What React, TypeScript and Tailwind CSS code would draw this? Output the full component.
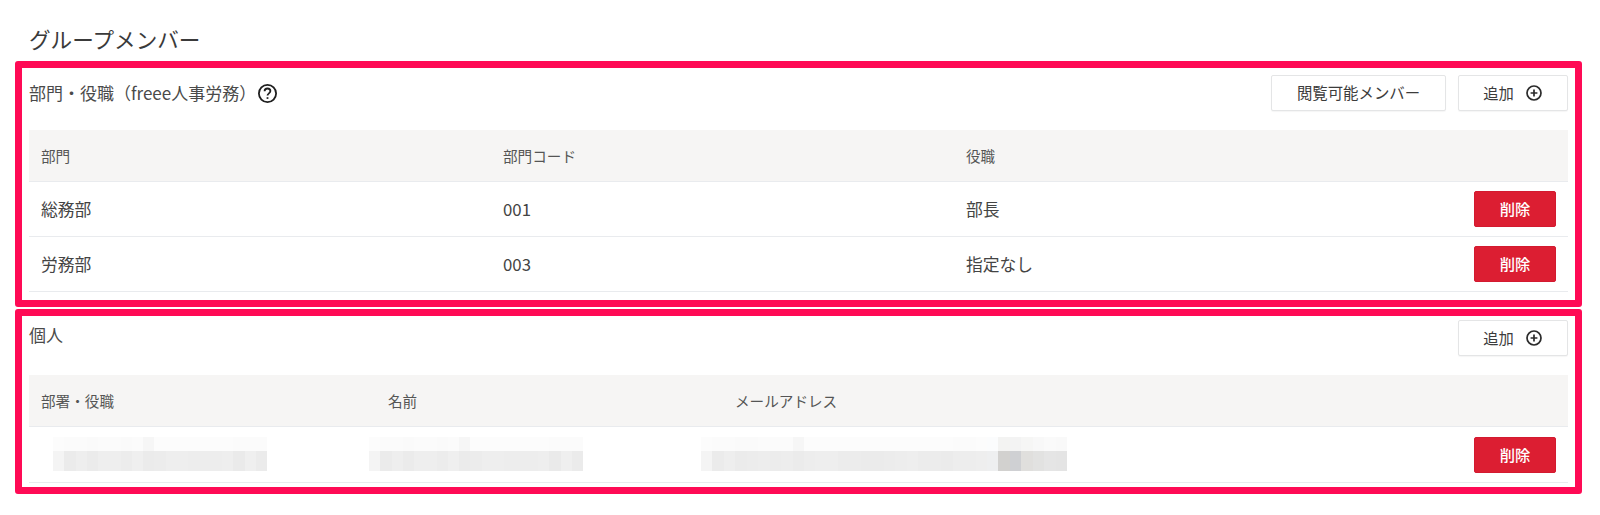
const jp = "font-['Noto_Sans_CJK_JP','Noto_Sans',sans-serif]";

// mosaic used where the original hides personal data
const blurA = {
  top: ['#fcfcfc', '#fbfbfb', '#fbfbfb', '#fafafa', '#fbfbfb', '#fbfbfb', '#fafafa', '#fbfbfb', '#f6f6f6', '#fcfcfc', '#fcfcfc', '#fcfcfc', '#fcfcfc', '#fcfcfc', '#fcfcfc', '#fcfcfc', '#fbfbfb', '#fbfbfb', '#fbfbfb'],
  bottom: ['#f4f4f4', '#ebebeb', '#eeeeee', '#ebebeb', '#eeeeee', '#eeeeee', '#ececec', '#efefef', '#ebebeb', '#ececec', '#eeeeee', '#eeeeee', '#ededed', '#ededed', '#ededed', '#eeeeee', '#eaeaea', '#efefef', '#ebebeb'],
};

const blurC = {
  top: ['#fcfcfc', '#fbfbfb', '#fbfbfb', '#fafafa', '#fafafa', '#fbfbfb', '#fbfbfb', '#fbfbfb', '#f6f6f6', '#fcfcfc', '#fcfcfc', '#fcfcfc', '#fcfcfc', '#fcfcfc', '#fcfcfc', '#fcfcfc', '#fcfcfc', '#fcfcfc', '#fcfcfc', '#fcfcfc', '#fcfcfc', '#fcfcfc', '#fbfbfb', '#fbfbfb', '#fcfcfc', '#fbfcfd', '#f3f3f2', '#f3f3f3', '#f6f6f5', '#f8f8f8', '#fafafa', '#f9f9f9'],
  bottom: ['#f4f4f4', '#ebebeb', '#eeeeee', '#ebebeb', '#ececec', '#ededed', '#ececec', '#ededed', '#ebebeb', '#ededed', '#eeeeee', '#eeeeee', '#ececec', '#ececec', '#ebebeb', '#ebebeb', '#ececec', '#ededed', '#eeeeee', '#ececec', '#ececec', '#ebebeb', '#ededed', '#ededed', '#eeeeee', '#eeeff0', '#d2d1cf', '#cfd0d3', '#e0dfdd', '#e2e2e1', '#e5e5e5', '#e4e4e4'],
};

function Mosaic({ data, width }: { data: { top: string[]; bottom: string[] }; width: string }) {
  return (
    <div className={`mb-[2px] flex flex-col ${width}`}>
      <div className="flex h-[14px]">
        {data.top.map((c, i) => (
          <div key={i} className="flex-1" style={{ backgroundColor: c }} />
        ))}
      </div>
      <div className="flex h-[20px]">
        {data.bottom.map((c, i) => (
          <div key={i} className="flex-1" style={{ backgroundColor: c }} />
        ))}
      </div>
    </div>
  );
}

function PlusIcon() {
  return (
    <svg width="18" height="18" viewBox="0 0 18 18" fill="none" stroke="#2b2b2b" strokeWidth="1.7">
      <circle cx="9" cy="9" r="7" />
      <path d="M9 5.6v6.8M5.6 9h6.8" />
    </svg>
  );
}

function HelpIcon() {
  return (
    <svg className="ml-[1px]" width="21" height="21" viewBox="0 0 21 21" fill="none" stroke="#1f1f1f" strokeWidth="1.8">
      <circle cx="10.5" cy="10.5" r="8.6" />
      <path d="M7.6 8.3c0-1.7 1.3-2.8 2.9-2.8s2.9 1 2.9 2.6c0 2.3-2.9 2.3-2.9 4.5" />
      <path d="M10.5 14.2v1.7" />
    </svg>
  );
}

function AddButton() {
  return (
    <button className="flex h-9 w-[110px] items-center justify-center gap-[11px] rounded-[2px] border border-[#e4e5e6] bg-white pb-[1px] text-[15.3px] text-[#3c3c3c] shadow-[0_1px_1px_rgba(0,0,0,0.04)]">
      追加
      <PlusIcon />
    </button>
  );
}

function DeleteButton() {
  return (
    <button className="h-9 w-[82px] rounded-[2px] border border-[#d31a30] bg-[#dc1e32] pb-[1px] text-[15.3px] font-medium text-white">
      削除
    </button>
  );
}

function HeadCell({ children }: { children: string }) {
  return <div className="flex items-center px-3 text-[14.6px] text-[#555555]">{children}</div>;
}

function BodyCell({ children }: { children: string }) {
  return <div className="flex items-center px-3 pt-[2px] text-[16.8px] text-[#444444]">{children}</div>;
}

export default function App() {
  return (
    <div className={`${jp} h-[515px] w-[1600px] overflow-hidden bg-white pl-[15px] pr-[18px]`}>
      <h2 className="flex h-[61px] items-end pb-[7px] pl-[14px] text-[21.6px] leading-[30px] text-[#3a3a3a]">
        グループメンバー
      </h2>

      {/* 部門・役職 */}
      <section className="h-[246px] rounded-[3px] border-[7px] border-[#ff0a55] px-[7px]">
        <div className="flex h-[62px] items-start justify-between">
          <div className="flex h-[50px] items-center text-[17px] text-[#4a4a4a]">
            <span>部門・役職（freee人事労務）</span>
            <HelpIcon />
          </div>
          <div className="flex gap-3 pt-[7px]">
            <button className="h-9 w-[175px] rounded-[2px] border border-[#e4e5e6] bg-white pb-[1px] text-[15.4px] text-[#3c3c3c] shadow-[0_1px_1px_rgba(0,0,0,0.04)]">
              閲覧可能メンバー
            </button>
            <AddButton />
          </div>
        </div>
        <div className="grid h-[52px] grid-cols-[462px_463px_1fr] border-b border-[#e9ebee] bg-[#f6f5f4]">
          <HeadCell>部門</HeadCell>
          <HeadCell>部門コード</HeadCell>
          <HeadCell>役職</HeadCell>
        </div>
        <div className="grid h-[55px] grid-cols-[462px_463px_1fr_94px] border-b border-[#e9ebee]">
          <BodyCell>総務部</BodyCell>
          <BodyCell>001</BodyCell>
          <BodyCell>部長</BodyCell>
          <div className="flex items-center">
            <DeleteButton />
          </div>
        </div>
        <div className="grid h-[55px] grid-cols-[462px_463px_1fr_94px] border-b border-[#e9ebee]">
          <BodyCell>労務部</BodyCell>
          <BodyCell>003</BodyCell>
          <BodyCell>指定なし</BodyCell>
          <div className="flex items-center">
            <DeleteButton />
          </div>
        </div>
      </section>

      {/* 個人 */}
      <section className="mt-[2px] h-[185px] rounded-[3px] border-[7px] border-[#ff0a55] px-[7px]">
        <div className="flex h-[59px] items-start justify-between pt-[4px]">
          <span className="mt-[3px] text-[17px] leading-[24px] text-[#4a4a4a]">個人</span>
          <AddButton />
        </div>
        <div className="grid h-[52px] grid-cols-[347px_347px_1fr] border-b border-[#e9ebee] bg-[#f6f5f4]">
          <HeadCell>部署・役職</HeadCell>
          <HeadCell>名前</HeadCell>
          <HeadCell>メールアドレス</HeadCell>
        </div>
        <div className="grid h-[56px] grid-cols-[340px_332px_1fr_94px] items-center border-b border-[#e9ebee]">
          <div className="pl-6">
            <Mosaic data={blurA} width="w-[214px]" />
          </div>
          <div>
            <Mosaic data={blurA} width="w-[214px]" />
          </div>
          <div>
            <Mosaic data={blurC} width="w-[366px]" />
          </div>
          <DeleteButton />
        </div>
      </section>
    </div>
  );
}
